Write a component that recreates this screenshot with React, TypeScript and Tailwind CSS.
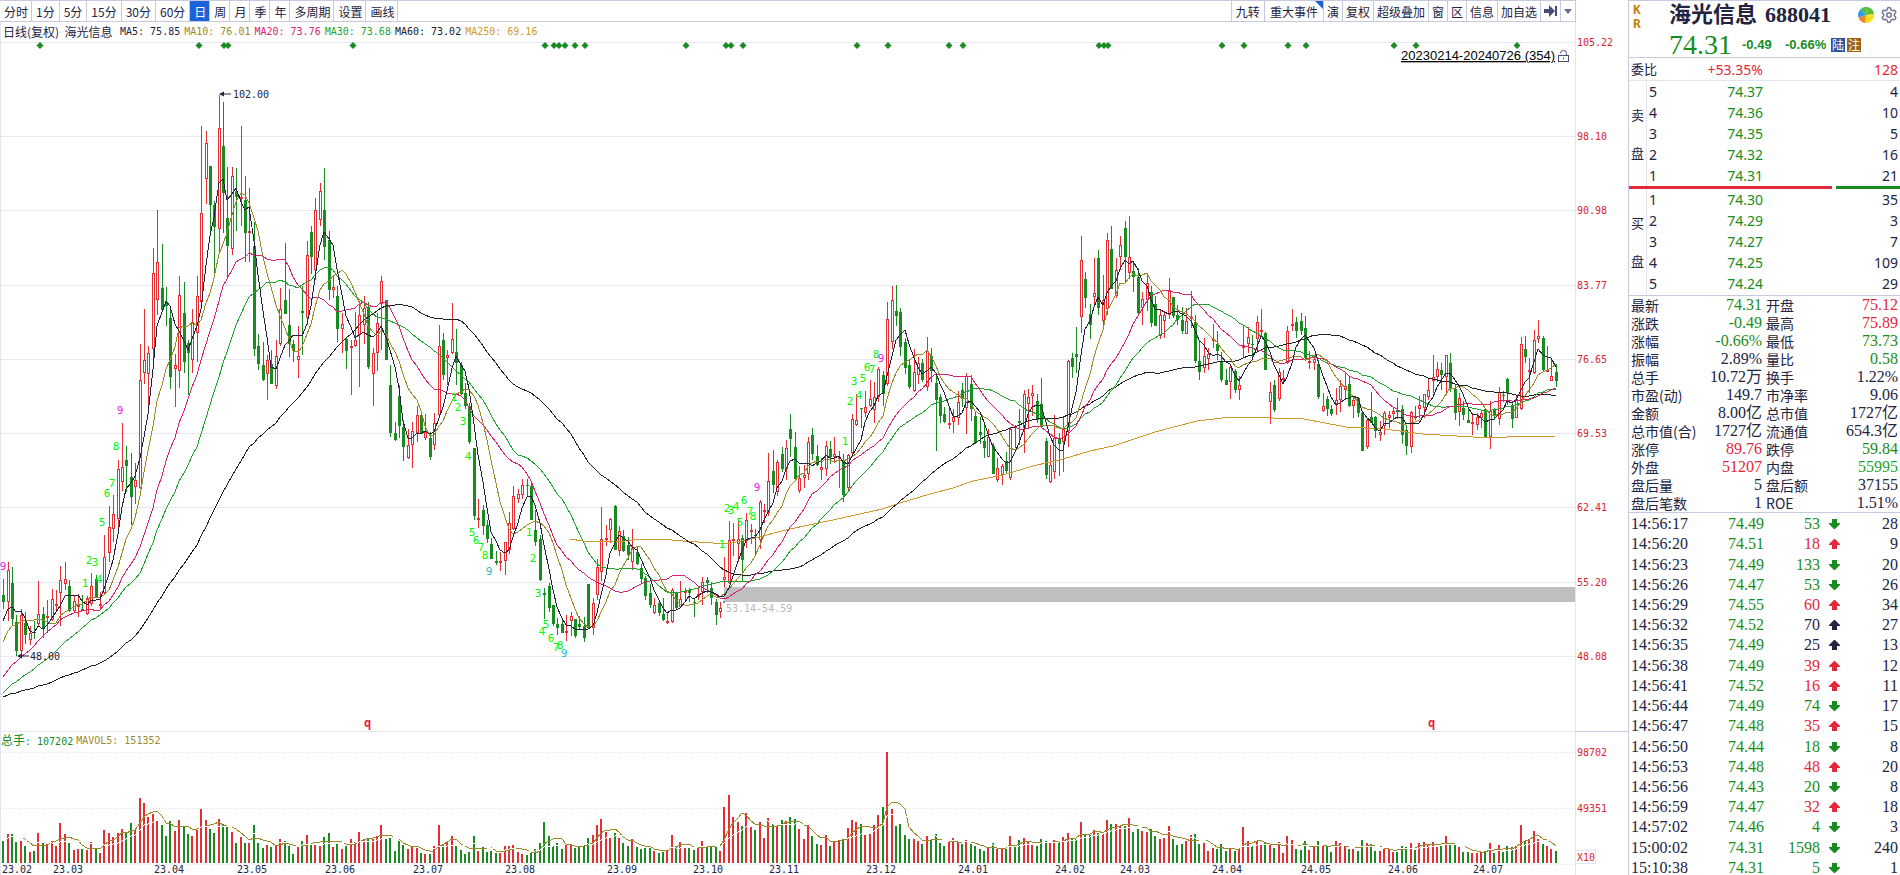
import { Settings } from 'lucide-react'

const periods = ['分时', '1分', '5分', '15分', '30分', '60分', '日', '周', '月', '季', '年', '多周期', '设置', '画线']

const tools = [
  { name: '九转', pad: 'px-1' },
  { name: '重大事件', pad: 'px-[5px]', corner: true },
  { name: '演', pad: 'px-[3px]' },
  { name: '复权', pad: 'px-[3px]' },
  { name: '超级叠加', pad: 'px-[3px]' },
  { name: '窗', pad: 'px-[3px]' },
  { name: '区', pad: 'px-[3px]' },
  { name: '信息', pad: 'px-[3px]' },
  { name: '加自选', pad: 'px-[3px]' },
]

const averages = [
  { text: 'MA5: 75.85', color: 'text-[#23233f]' },
  { text: 'MA10: 76.01', color: 'text-[#9c8a28]' },
  { text: 'MA20: 73.76', color: 'text-[#d8246e]' },
  { text: 'MA30: 73.68', color: 'text-[#1ea32c]' },
  { text: 'MA60: 73.02', color: 'text-[#222222]' },
  { text: 'MA250: 69.16', color: 'text-[#d09a2a]' },
]

const priceAxis: [string, number][] = [
  ['105.22', 42], ['98.10', 136], ['90.98', 210], ['83.77', 285], ['76.65', 359],
  ['69.53', 433], ['62.41', 507], ['55.20', 582], ['48.08', 656],
]

const months: [string, number][] = [
  ['23.02', 2], ['23.03', 53], ['23.04', 154], ['23.05', 237], ['23.06', 325], ['23.07', 413],
  ['23.08', 505], ['23.09', 607], ['23.10', 693], ['23.11', 769], ['23.12', 866], ['24.01', 958],
  ['24.02', 1055], ['24.03', 1120], ['24.04', 1212], ['24.05', 1301], ['24.06', 1388], ['24.07', 1473],
]

const events = [
  40, 199, 224, 228, 353, 545, 554, 559, 565, 575, 585, 686, 726, 731, 743, 857, 888, 949, 963,
  1099, 1104, 1108, 1222, 1244, 1288, 1306, 1394, 1416, 1517,
]

// nine-turn marks: x, y of each count; 9 is coloured by direction
const turns: { start: number; last: string; points: [number, number][] }[] = [
  { start: 9, last: '#f020f0', points: [[3, 566]] },
  { start: 1, last: '#f020f0', points: [[85, 583], [89, 560], [95, 562], [99, 579], [102, 522], [107, 493], [112, 483], [116, 446], [120, 410]] },
  { start: 1, last: '#10c4c8', points: [[454, 397], [458, 407], [463, 421], [468, 456], [472, 532], [476, 540], [481, 547], [485, 555], [489, 571]] },
  { start: 1, last: '#10c4c8', points: [[529, 532], [533, 558], [538, 593], [542, 631], [546, 624], [551, 638], [556, 647], [560, 645], [564, 653]] },
  { start: 1, last: '#f020f0', points: [[722, 544], [727, 508], [731, 510], [736, 506], [740, 522], [744, 500], [750, 511], [753, 516], [757, 487]] },
  { start: 1, last: '#f020f0', points: [[845, 441], [850, 401], [854, 381], [859, 395], [863, 378], [867, 367], [872, 369], [876, 354], [881, 358]] },
]

// r = up, g = down, then high, body top, body bottom, low
const bars = `
g579,595,602,609 r562,570,602,621 g567,583,619,626 g615,622,651,656 r609,615,651,656 g612,623,635,644
r626,633,640,645 g621,632,633,639 r581,614,624,627 g607,614,629,638 r600,616,618,633 r589,599,620,621
r590,604,605,610 r566,580,593,626 r562,579,584,590 g580,586,611,612 r595,601,611,613 r594,605,606,617
g595,609,611,611 r596,598,614,615 r573,586,604,606 g575,579,598,598 r592,604,605,609 r535,557,593,595
r506,527,553,562 r495,514,529,542 r460,469,519,531 r423,467,482,491 g446,460,466,492 g453,477,497,525
r463,480,487,504 r344,380,488,489 r309,360,373,384 r346,353,374,408 r248,273,349,362 r210,262,300,315
g244,288,310,312 g287,302,306,326 g308,318,377,389 r354,365,369,407 r276,295,371,388 g282,313,362,373
g340,343,353,395 r309,322,360,373 r276,296,333,362 r126,213,302,302 r131,143,179,204 g166,166,205,233
g201,205,227,276 r95,128,229,253 g102,146,193,233 g167,218,246,278 r167,176,249,255 g168,191,197,231
r126,197,198,226 g176,200,233,262 r188,231,233,262 g222,246,349,356 g334,346,364,370 g342,365,380,381
r355,360,374,400 g350,364,384,384 r340,356,386,389 r288,309,344,346 g243,300,314,314 g289,325,344,357
g340,344,351,362 r326,356,360,378 g286,311,313,355 r241,255,318,325 g226,232,257,274 r198,210,270,280
r183,191,220,226 g168,210,247,260 g231,240,290,300 r276,287,290,298 g286,296,329,342 r313,324,329,353
g337,339,351,369 r340,346,348,395 r312,340,346,347 r301,315,335,387 r296,308,325,344 g302,307,367,369
r348,353,374,406 r313,323,353,371 r276,281,304,350 g300,300,360,360 g365,385,433,437 g422,433,440,441
g385,396,426,438 g420,427,447,461 r429,445,458,459 r422,431,445,468 r406,415,433,442 g411,415,434,434
r414,432,438,440 g432,438,457,460 r413,423,445,450 r325,346,415,415 g333,340,375,380 r350,355,358,385
r303,339,353,354 g329,352,363,385 g362,365,394,395 g383,393,406,409 g403,406,442,444 g448,448,516,520
r499,518,519,528 g505,510,526,535 g520,525,539,543 g538,544,559,559 g551,561,563,565 r552,561,562,571
r542,542,561,575 r512,523,550,554 r486,496,529,530 r489,494,499,503 r479,485,495,499 g479,485,486,497
g483,486,520,520 g510,530,542,546 g535,539,580,581 g588,593,595,619 g583,586,608,612 g605,605,624,626
g618,624,628,635 g618,624,633,633 r615,631,632,641 r612,616,621,636 g619,619,636,638 g616,624,627,629
g617,626,638,642 g584,584,628,629 r598,603,628,635 r559,567,595,600 r507,539,572,581 r525,538,539,546
r518,519,530,543 g505,506,550,550 r526,531,551,556 g530,536,551,552 g537,545,555,560 r529,548,562,570
g546,552,564,565 g564,568,579,584 g576,578,596,600 g584,593,605,608 r598,605,613,614 g600,603,613,616
g598,614,620,621 r613,621,623,624 r588,590,622,623 g592,593,608,610 r581,599,607,608 r588,591,592,600
g588,590,593,602 g598,602,603,617 r588,594,597,600 r577,582,592,605 g577,580,583,593 g582,588,598,605
g599,602,615,625 r602,608,612,618 r557,577,580,587 r521,540,583,584 r523,539,540,556 r519,539,544,562
g535,538,560,582 r513,520,541,548 r524,530,531,544 g529,535,536,556 r500,502,540,549 r504,510,512,523
r453,481,513,516 g450,471,485,493 r460,462,492,496 g447,454,469,472 r440,448,469,480 g414,429,439,457
g432,447,479,481 r466,478,491,493 r465,475,478,488 r437,442,474,480 g428,435,454,460 g445,456,465,466
r458,467,470,480 r441,446,469,476 g441,449,457,464 r437,454,457,463 r451,457,458,488 g454,460,495,502
r454,455,488,492 r414,419,453,455 r394,420,425,426 g408,408,409,428 r391,407,413,417 r380,399,406,407
r382,397,410,423 r367,369,397,402 g371,375,394,406 r302,319,384,386 r286,300,342,349 g285,311,316,326
g308,312,347,356 g338,342,368,374 g360,365,387,389 r349,372,391,392 r357,363,375,384 g359,363,380,382
r337,351,387,391 g348,356,371,382 g374,383,400,451 g394,397,416,423 g407,414,422,423 r406,423,425,429
r409,417,422,433 r391,402,418,425 g383,390,399,407 r373,376,408,434 g375,384,409,421 g412,416,443,444
g417,432,435,444 g422,441,448,458 r429,437,457,457 g443,446,474,474 r458,468,480,482 r464,466,475,485
g452,461,471,473 r428,429,478,480 g425,427,428,448 g409,421,423,445 r390,394,428,453 r389,397,404,429
r385,393,396,416 g394,401,420,423 g378,404,427,428 g438,441,475,479 r445,465,482,483 r415,438,472,479
g433,438,444,476 r416,429,442,472 r360,361,431,447 g353,358,367,378 g327,354,357,373 r236,260,317,333
g272,279,298,308 g304,314,325,339 r258,293,297,304 g250,258,308,315 r275,300,321,325 r233,240,309,315
g226,249,289,289 r258,270,296,298 r236,245,257,270 g221,228,257,283 r216,257,273,279 g262,271,277,292
g268,277,313,315 r292,299,308,325 r274,283,300,311 g286,292,323,327 g296,304,326,326 r310,315,336,339
r311,315,321,338 r278,290,315,319 g297,297,316,318 g305,315,320,325 g307,320,331,334 r308,321,334,334
r291,317,318,328 g315,322,361,363 g341,361,372,380 r338,356,368,373 r348,354,359,370 r324,339,340,348
g331,344,351,360 g352,362,380,382 g369,380,385,385 r364,367,382,399 g369,371,390,393 r376,385,390,400
r326,345,348,358 r327,337,344,353 g335,344,345,360 r316,322,339,350 r309,330,331,336 g332,333,370,370
r382,392,402,424 g380,385,410,412 r368,372,399,401 r370,378,379,383 r326,331,363,364 r309,324,325,331
g317,322,331,338 g313,321,331,335 g316,328,358,361 r351,361,361,369 r356,359,363,370 g360,364,397,399
r393,406,411,412 g396,399,409,416 g405,409,414,416 r388,400,404,415 r380,386,400,412 r372,386,390,400
g376,384,406,407 r397,400,406,418 g397,398,413,417 g411,413,451,451 r418,420,447,449 g392,417,423,423
g416,417,431,438 r421,432,435,441 r411,413,426,435 r411,415,418,428 r407,411,414,420 g398,410,412,419
g405,409,435,444 g425,430,446,455 r411,412,447,453 g406,417,417,420 r396,405,409,418 r394,394,408,418
r378,390,397,400 r355,377,381,393 r362,369,377,382 g363,370,375,390 r355,355,377,395 g353,363,388,392
g384,389,413,420 r393,398,412,426 g401,408,415,420 g409,420,423,423 r413,422,422,435 r413,417,425,430
r411,413,418,428 g408,409,437,437 r401,411,437,449 g408,409,415,420 r387,392,419,425 g391,395,396,402
g378,379,393,405 g402,405,419,428 r395,399,418,418 r337,344,409,410 g336,349,357,363 r358,370,371,393
r330,340,373,374 r320,336,339,343 g336,338,370,372 r346,370,371,372 r358,376,381,381 g364,372,381,387
`

const volumes = [
  22, 29, 29, 21, 22, 17, 11, 12, 30, 20, 19, 22, 17, 40, 29, 20, 13, 14, 14, 13,
  21, 14, 10, 33, 30, 26, 30, 34, 30, 40, 33, 65, 60, 46, 49, 42, 38, 27, 42, 32,
  44, 36, 29, 27, 33, 54, 43, 34, 30, 44, 39, 36, 31, 20, 26, 20, 20, 38, 20, 15,
  18, 16, 18, 24, 22, 17, 9, 16, 22, 28, 18, 19, 17, 26, 30, 16, 19, 14, 17, 24,
  21, 31, 24, 25, 24, 27, 38, 24, 25, 12, 22, 18, 14, 16, 15, 10, 9, 9, 17, 38,
  19, 21, 27, 17, 13, 9, 11, 27, 12, 16, 11, 12, 10, 10, 17, 17, 18, 11, 9, 8,
  10, 14, 20, 41, 27, 17, 20, 14, 19, 19, 15, 16, 17, 25, 28, 38, 44, 31, 25, 30,
  25, 20, 17, 24, 16, 14, 15, 15, 12, 10, 11, 12, 28, 17, 21, 15, 15, 13, 15, 22,
  16, 17, 16, 12, 56, 68, 46, 41, 37, 50, 36, 33, 41, 25, 45, 39, 37, 43, 42, 46,
  44, 34, 24, 38, 27, 19, 18, 28, 17, 22, 23, 25, 35, 43, 41, 39, 28, 29, 38, 48,
  56, 111, 54, 37, 39, 28, 24, 24, 22, 19, 27, 23, 29, 20, 17, 21, 25, 21, 19, 23,
  19, 17, 14, 12, 15, 20, 14, 14, 14, 27, 16, 23, 25, 21, 19, 17, 24, 22, 20, 23,
  21, 26, 30, 24, 24, 41, 28, 28, 33, 30, 29, 43, 39, 39, 37, 37, 45, 31, 34, 32,
  31, 34, 27, 24, 25, 37, 24, 18, 19, 22, 28, 29, 19, 20, 12, 15, 14, 19, 12, 14,
  12, 14, 36, 22, 17, 22, 18, 21, 19, 15, 21, 10, 27, 23, 14, 13, 22, 13, 17, 22,
  18, 17, 11, 22, 20, 17, 14, 14, 12, 23, 20, 19, 12, 12, 14, 15, 11, 11, 17, 16,
  20, 13, 20, 21, 19, 21, 16, 17, 27, 18, 18, 16, 11, 11, 10, 10, 11, 12, 20, 10,
  18, 11, 17, 16, 17, 38, 22, 24, 32, 24, 19, 17, 14, 12,
]

const candles = bars.trim().split(/\s+/).map((s) => {
  const [high, top, bottom, low] = s.slice(1).split(',').map(Number)
  return { up: s[0] === 'r', high, top, bottom, low }
})

// closes from before the first visible day, needed by the long averages
const earlier = [
  ...Array(30).fill(701),
  ...Array(10).fill(724),
  ...Array(10).fill(713),
  675, 669, 662, 655, 649, 632, 628, 624, 620,
]
const closes = [...earlier, ...candles.map((c) => (c.up ? c.top : c.bottom))]

const barX = (i: number) => 3 + Math.round(4.398 * i + 0.2)

const mean = (list: number[]) => list.reduce((a, b) => a + b, 0) / list.length

const maLine = (n: number) =>
  candles
    .map((_, i) => {
      const end = i + earlier.length + 1
      return `${barX(i)},${Math.round(mean(closes.slice(end - n, end)))}`
    })
    .join(' ')

const volLine = (n: number) =>
  volumes.map((_, i) => `${barX(i)},${Math.round(863 - mean(volumes.slice(Math.max(0, i - n + 1), i + 1)))}`).join(' ')

const ma250 =
  '570,539 583,541 625,541 640,539 660,539 683,541 713,543 727,544 755,538 790,529 833,520 882,509 900,503 930,494 953,488 973,481 1003,475 1033,466 1063,459 1090,451 1113,446 1155,432 1197,421 1231,417 1254,417 1273,418 1304,419 1346,427 1384,429 1423,434 1457,436 1488,438 1526,436 1555,436'

const UP = '#e62e32'
const DOWN = '#188c20'

const PriceChart = () => (
  <svg viewBox="0 38 1628 693" className="block w-full h-auto font-['DejaVu_Sans_Mono',monospace] text-[10px]">
    <g shapeRendering="crispEdges">
      {priceAxis.map(([label, y]) => (
        <line key={label} x1={0} x2={1575} y1={y + 0.5} y2={y + 0.5} stroke="#e8e8f4" />
      ))}
      <path d="M0.5 38V731M1575.5 38V731" stroke="#e4e4f2" />
      <rect x={724} y={587} width={851} height={15} fill="#bfbfbf" />
      {candles.map((c, i) => {
        const x = barX(i)
        const height = c.bottom - c.top
        return (
          <g key={i}>
            <rect x={x} y={c.high} width={1} height={Math.max(1, c.low - c.high)} fill={c.up ? UP : DOWN} />
            {c.up ? (
              <rect x={x - 0.5} y={c.top + 0.5} width={2} height={Math.max(0.5, height - 1)} fill="#fff" stroke={UP} />
            ) : (
              <rect x={x - 1} y={c.top} width={3} height={Math.max(1, height)} fill={DOWN} />
            )}
          </g>
        )
      })}
      <g fill="none" strokeWidth={1}>
        <polyline points={ma250} stroke="#d09a2a" />
        <polyline points={maLine(60)} stroke="#222222" />
        <polyline points={maLine(30)} stroke="#1ea32c" />
        <polyline points={maLine(20)} stroke="#d8246e" />
        <polyline points={maLine(10)} stroke="#9c8a28" />
        <polyline points={maLine(5)} stroke="#23233f" />
      </g>
    </g>
    {events.map((x) => (
      <path key={x} d={`M${x} 42l3.5 3.5l-3.5 3.5l-3.5 -3.5z`} fill={DOWN} />
    ))}
    <g className="text-[11px]">
      {turns.map((t) =>
        t.points.map(([x, y], i) => {
          const n = t.start + i
          return (
            <text key={`${x}-${y}`} x={x} y={y + 4} textAnchor="middle" fill={n === 9 ? t.last : '#00f800'}>
              {n}
            </text>
          )
        }),
      )}
    </g>
    <g fill="#23233f">
      <path d="M219 94l5 -2.5v2h7v1h-7v2z" />
      <text x={233} y={98}>102.00</text>
      <path d="M17 656l5 -2.5v2h7v1h-7v2z" />
      <text x={30} y={660}>48.00</text>
    </g>
    <rect x={723} y={601} width={2} height={2} fill="#8a8a9a" />
    <text x={726} y={612} fill="#b8b8b8">53.14-54.59</text>
    <text x={1555} y={60} textAnchor="end" fill="#000" className="font-['Liberation_Sans',Arial,sans-serif] text-[13px] underline">
      20230214-20240726 (354)
    </text>
    <g fill="none" stroke="#4a4a78">
      <rect x={1558.5} y={55.5} width={10} height={6} />
      <path d="M1560.5 53.5a3 3 0 0 1 6 0v2M1563.5 57.5v2" />
    </g>
    <g fill="#e2283c" className="text-[12px] font-bold">
      <text x={364} y={727}>q</text>
      <text x={1428} y={727}>q</text>
    </g>
    <g fill="#d8262e">
      {priceAxis.map(([label, y]) => (
        <text key={label} x={1577} y={y + 4}>{label}</text>
      ))}
    </g>
  </svg>
)

const VolumeChart = () => (
  <svg viewBox="0 746 1628 129" className="block w-full h-auto font-['DejaVu_Sans_Mono',monospace] text-[10px]">
    <g shapeRendering="crispEdges">
      <path d="M0 752.5H1575M0 808.5H1575M0 864.5H1575" stroke="#dcdcec" strokeDasharray="1 2" />
      <path d="M0.5 746V875M1575.5 746V875" stroke="#e4e4f2" />
      {volumes.map((v, i) => (
        <rect key={i} x={barX(i) - 1} y={863 - v} width={2} height={v} fill={candles[i].up ? UP : DOWN} />
      ))}
      <polyline points={volLine(5)} fill="none" stroke="#9c8a28" />
      <polyline points={volLine(10)} fill="none" stroke="#fff" />
      <rect x={1575.5} y={850.5} width={20} height={13} fill="#fff" stroke="#e4e4f2" />
    </g>
    <g fill="#d8262e">
      <text x={1577} y={756}>98702</text>
      <text x={1577} y={812}>49351</text>
      <text x={1577} y={861}>X10</text>
    </g>
    <g fill="#23233f">
      {months.map(([label, x]) => (
        <text key={label} x={x} y={873}>{label}</text>
      ))}
    </g>
  </svg>
)

const Toolbar = () => (
  <div className="flex h-[22px] border-y border-[#c8c8e0] mr-[52px] text-[12px] leading-[19px]">
    {periods.map((p) => (
      <button
        key={p}
        className={`pl-1 border-r border-[#c8c8e0] whitespace-nowrap ${/\d/.test(p) ? 'pr-1' : 'pr-[3px]'} ${p === '日' ? 'bg-[#1c62d8] text-white' : ''}`}
      >
        {p}
      </button>
    ))}
    <div className="flex-1 border-r border-[#c8c8e0]"></div>
    {tools.map((t) => (
      <button key={t.name} className={`relative ${t.pad} border-r border-[#c8c8e0] whitespace-nowrap`}>
        {t.name}
        {t.corner && (
          <svg viewBox="0 0 8 8" className="absolute right-0 top-0 w-2 h-2">
            <path d="M0 0h8v8z" fill="#1c62d8" />
          </svg>
        )}
      </button>
    ))}
    <button aria-label="下一个" className="flex items-center justify-center w-5 border-r border-[#c8c8e0]">
      <svg viewBox="0 0 13 12" className="w-[13px] h-3" fill="#4a4a78">
        <path d="M0 4h5V0l6 6l-6 6V8H0zM11 1h2v10h-2z" />
      </svg>
    </button>
    <button aria-label="更多" className="flex items-center justify-center w-[15px] border-r border-[#c8c8e0]">
      <svg viewBox="0 0 8 5" className="w-2 h-[5px]" fill="#6a6a92">
        <path d="M0 0h8l-4 5z" />
      </svg>
    </button>
  </div>
)

const sells = [['5', '74.37', '4'], ['4', '74.36', '10'], ['3', '74.35', '5'], ['2', '74.32', '16'], ['1', '74.31', '21']]
const buys = [['1', '74.30', '35'], ['2', '74.29', '3'], ['3', '74.27', '7'], ['4', '74.25', '109'], ['5', '74.24', '29']]

const R = 'text-[#e2283a]'
const G = 'text-[#188c20]'
const D = 'text-[#23233f]'

const quotes = [
  ['最新', '74.31', G, '开盘', '75.12', R],
  ['涨跌', '-0.49', G, '最高', '75.89', R],
  ['涨幅', '-0.66%', G, '最低', '73.73', G],
  ['振幅', '2.89%', D, '量比', '0.58', G],
  ['总手', '10.72万', D, '换手', '1.22%', D],
  ['市盈(动)', '149.7', D, '市净率', '9.06', D],
  ['金额', '8.00亿', D, '总市值', '1727亿', D],
  ['总市值(合)', '1727亿', D, '流通值', '654.3亿', D],
  ['涨停', '89.76', R, '跌停', '59.84', G],
  ['外盘', '51207', R, '内盘', '55995', 'text-[#1ea32c]'],
  ['盘后量', '5', D, '盘后额', '37155', D],
  ['盘后笔数', '1', D, 'ROE', '1.51%', D],
]

const ticks: [string, string, string, 'up' | 'down', string, string][] = [
  ['14:56:17', '74.49', '53', 'down', G, '28'],
  ['14:56:20', '74.51', '18', 'up', R, '9'],
  ['14:56:23', '74.49', '133', 'down', G, '20'],
  ['14:56:26', '74.47', '53', 'down', G, '26'],
  ['14:56:29', '74.55', '60', 'up', R, '34'],
  ['14:56:32', '74.52', '70', 'up', D, '27'],
  ['14:56:35', '74.49', '25', 'up', D, '13'],
  ['14:56:38', '74.49', '39', 'up', R, '12'],
  ['14:56:41', '74.52', '16', 'up', R, '11'],
  ['14:56:44', '74.49', '74', 'down', G, '17'],
  ['14:56:47', '74.48', '35', 'up', R, '15'],
  ['14:56:50', '74.44', '18', 'down', G, '8'],
  ['14:56:53', '74.48', '48', 'up', R, '20'],
  ['14:56:56', '74.43', '20', 'down', G, '8'],
  ['14:56:59', '74.47', '32', 'up', R, '18'],
  ['14:57:02', '74.46', '4', 'down', G, '3'],
  ['15:00:02', '74.31', '1598', 'down', G, '240'],
  ['15:10:38', '74.31', '5', 'down', G, '1'],
]

const Depth = ({ side, rows }: { side: string; rows: string[][] }) => (
  <div className="flex">
    <div className="flex flex-col items-center justify-center gap-5 w-[18px] border-r border-[#e4e4f2] text-[13px] leading-[18px]">
      <span>{side}</span>
      <span>盘</span>
    </div>
    <table className="flex-1 font-['Noto_Sans',sans-serif] text-[14px] leading-[21px]">
      <tbody>
        {rows.map(([level, price, amount]) => (
          <tr key={price}>
            <td className="w-5 pl-0.5">{level}</td>
            <td className={`w-24 text-right ${G}`}>{price}</td>
            <td className="text-right pr-0.5">{amount}</td>
          </tr>
        ))}
      </tbody>
    </table>
  </div>
)

const Header = () => (
  <div className="flex h-[57px] border-b border-[#c8c8e0]">
    <div className="w-10 pl-1 pt-0.5 text-[13px] leading-[14px] font-bold text-[#c48208] font-['DejaVu_Sans_Mono',monospace]">
      <p>K</p>
      <p>R</p>
    </div>
    <div className="flex-1">
      <div className="flex items-center h-7">
        <h1 className="flex-1 flex gap-2 text-[22px] leading-7 font-bold whitespace-nowrap font-['Liberation_Serif','Noto_Sans_CJK_SC',serif]">
          <span>海光信息</span>
          <span>688041</span>
        </h1>
        <svg viewBox="0 0 16 16" className="w-4 h-4 mr-1.5">
          <path d="M8 8L2.200 2.500A8 8 0 0 1 9 0z" fill="#4cc04c" />
          <path d="M8 8L9 0A8 8 0 0 1 16 7z" fill="#58c234" />
          <path d="M8 8l8 -1A8 8 0 0 1 7 16z" fill="#f8dc20" />
          <path d="M8 8l-1 8A8 8 0 0 1 0.500 10.500z" fill="#f0862a" />
          <path d="M8 8L0.500 10.500A8 8 0 0 1 2.200 2.500z" fill="#2e9ce0" />
        </svg>
        <Settings size={18} strokeWidth={2} className="mr-0.5 text-[#74749a]" />
      </div>
      <div className={`flex items-center h-7 pt-1 font-bold ${G}`}>
        <span className="w-[73px] text-[28px] leading-6 font-normal font-['Liberation_Serif',serif]">74.31</span>
        <span className="w-[43px] text-[13px] font-['Liberation_Sans',sans-serif]">-0.49</span>
        <span className="w-[46px] text-[13px] font-['Liberation_Sans',sans-serif]">-0.66%</span>
        <span className="w-[14px] h-[14px] text-[12px] leading-[14px] text-center font-normal text-white bg-[#2d52a0]">陆</span>
        <span className="w-[14px] h-[14px] ml-0.5 text-[12px] leading-[14px] text-center font-normal text-white bg-[#9c6414]">注</span>
      </div>
    </div>
  </div>
)

const App = () => {
  return (
    <div className="flex h-screen overflow-hidden bg-white text-[#23233f] font-['Noto_Sans_CJK_SC',sans-serif]">
      <main className="flex-1 min-w-0">
        <Toolbar />
        <div className="flex h-4">
          <div className="flex-1 flex items-center gap-1 pt-1 pl-0.5 border-x border-[#e4e4f2] font-['DejaVu_Sans_Mono','Noto_Sans_CJK_SC',monospace] text-[10px] leading-[14px] whitespace-pre">
            <span className="w-[113px] text-[12px] font-['Noto_Sans_CJK_SC',sans-serif]">日线(复权)  海光信息</span>
            {averages.map((a) => (
              <span key={a.text} className={a.color}>{a.text}</span>
            ))}
          </div>
          <div className="w-[52px]"></div>
        </div>
        <PriceChart />
        <div className="flex h-[15px]">
          <div className="flex-1 flex items-center gap-[3px] pt-1 border-x border-t border-[#e4e4f2] font-['DejaVu_Sans_Mono','Noto_Sans_CJK_SC',monospace] text-[10px] leading-[14px] whitespace-pre">
            <span className={G}><span className="text-[12px]">总手</span>: 107202</span>
            <span className="text-[#9c8a28]">MAVOL5: 151352</span>
          </div>
          <div className="w-[52px] border-t border-[#c8c8e0]"></div>
        </div>
        <VolumeChart />
      </main>

      <aside className="w-[272px] shrink-0 border-l border-t border-[#c8c8e0]">
        <Header />
        <div className="flex items-center h-[23px] pl-0.5 pr-0.5 border-b border-[#e4e4f2] text-[13px]">
          <span className="w-8">委比</span>
          <span className={`w-[100px] text-right text-[14px] font-['Noto_Sans',sans-serif] ${R}`}>+53.35%</span>
          <span className={`flex-1 text-right text-[14px] font-['Noto_Sans',sans-serif] ${R}`}>128</span>
        </div>
        <Depth side="卖" rows={sells} />
        <div className="flex gap-1 h-[3px]">
          <div className="w-3/4 bg-[#e2283a]"></div>
          <div className="flex-1 bg-[#188c20]"></div>
        </div>
        <Depth side="买" rows={buys} />
        <table className="w-full mt-px border-y border-[#c8c8e0] text-[14px] leading-[18px]">
          <tbody>
            {quotes.map(([a, av, ac, b, bv, bc]) => (
              <tr key={a}>
                <th className="pl-0.5 pt-px text-left font-normal leading-[17px] whitespace-nowrap">{a}</th>
                <td className={`text-right text-[16px] font-['Liberation_Serif','Noto_Sans_CJK_SC',serif] ${ac}`}>{av}</td>
                <th className="w-[62px] pl-1 pt-px text-left font-normal leading-[17px] whitespace-nowrap">{b}</th>
                <td className={`w-[76px] pr-0.5 text-right text-[16px] font-['Liberation_Serif','Noto_Sans_CJK_SC',serif] ${bc}`}>{bv}</td>
              </tr>
            ))}
          </tbody>
        </table>
        <table className="w-full h-[364px] mt-px font-['Liberation_Serif',serif] text-[16px] leading-[20px]">
          <tbody>
            {ticks.map(([time, price, amount, dir, color, count]) => (
              <tr key={time}>
                <td className="w-[75px] pl-0.5">{time}</td>
                <td className={`w-[60px] text-right ${G}`}>{price}</td>
                <td className={`w-14 text-right ${color}`}>{amount}</td>
                <td className={`w-7 ${color}`}>
                  <svg viewBox="0 0 11 10" className="w-[11px] h-[10px] mx-auto" fill="currentColor">
                    {dir === 'up' ? <path d="M5 0h1l5 5v1H8v4H3V6H0V5z" /> : <path d="M5 10h1l5 -5V4H8V0H3v4H0v1z" />}
                  </svg>
                </td>
                <td className="pr-0.5 text-right">{count}</td>
              </tr>
            ))}
          </tbody>
        </table>
      </aside>
    </div>
  )
}

export default App
